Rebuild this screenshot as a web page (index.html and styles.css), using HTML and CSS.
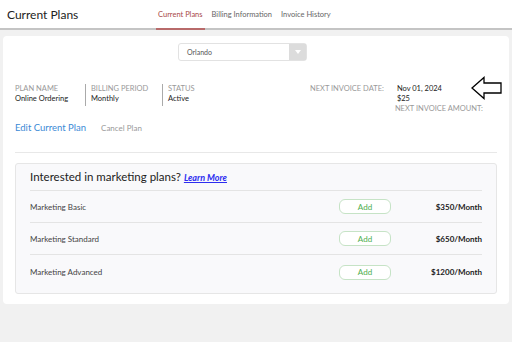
FILE: index.html
```html
<!DOCTYPE html>
<html lang="en">
<head>
  <meta charset="UTF-8" />
  <title>Current Plans</title>
  <link rel="stylesheet" href="styles.css">
</head>
<body>

  <!-- HEADER -->
  <div class="header">
    <div class="page-title">Current Plans</div>
    <div class="tabs">
      <span class="tab active">Current Plans</span>
      <span class="tab">Billing Information</span>
      <span class="tab">Invoice History</span>
    </div>
  </div>

  <div class="card">

    <!-- LOCATION -->
    <div class="select-row">
      <div class="select">
        <span class="select-text">Orlando</span>
        <span class="select-btn"><span class="caret"></span></span>
      </div>
    </div>

    <!-- PLAN INFO -->
    <div class="info-row">
      <div class="info">
        <div class="label">PLAN NAME</div>
        <div class="value">Online Ordering</div>
      </div>
      <div class="info sep">
        <div class="label">BILLING PERIOD</div>
        <div class="value">Monthly</div>
      </div>
      <div class="info sep">
        <div class="label">STATUS</div>
        <div class="value">Active</div>
      </div>
      <div class="invoice">
        <div class="label">NEXT INVOICE DATE:</div>
        <div class="invoice-values">
          <div class="value">Nov 01, 2024</div>
          <div class="value">$25</div>
          <div class="label amount-label">NEXT INVOICE AMOUNT:</div>
        </div>
      </div>
      <svg class="arrow" width="32" height="24" viewBox="0 0 32 24">
        <path d="M1 12 L13 1.5 L13 7 L30 7 L30 17 L13 17 L13 22.5 Z" fill="#fff" stroke="#000" stroke-width="1.3" stroke-linejoin="miter"/>
      </svg>
    </div>

    <div class="actions">
      <span class="link-edit">Edit Current Plan</span>
      <span class="link-cancel">Cancel Plan</span>
    </div>

    <hr class="divider">

    <!-- MARKETING -->
    <div class="marketing">
      <div class="marketing-title">Interested in marketing plans? <a class="learn">Learn More</a></div>
      <div class="plan-row">
        <span class="plan-name">Marketing Basic</span>
        <button class="btn-add">Add</button>
        <span class="price">$350/Month</span>
      </div>
      <div class="plan-row">
        <span class="plan-name">Marketing Standard</span>
        <button class="btn-add">Add</button>
        <span class="price">$650/Month</span>
      </div>
      <div class="plan-row">
        <span class="plan-name">Marketing Advanced</span>
        <button class="btn-add">Add</button>
        <span class="price">$1200/Month</span>
      </div>
    </div>

  </div>

</body>
</html>
```

FILE: styles.css
```css
body {
  font-family: 'Lato', 'Open Sans', sans-serif;
  margin: 0;
  background-color: #f1f1f1;
  color: #222;
}
.header {
  background: #fff;
  height: 28px;
  border-bottom: 2px solid #c4c4c4;
  display: flex;
  align-items: stretch;
}
.page-title {
  font-size: 12px;
  padding-left: 7px;
  width: 149px;
  display: flex;
  align-items: center;
}
.tabs {
  display: flex;
  gap: 5px;
}
.tab {
  font-size: 7.5px;
  color: #666;
  display: flex;
  align-items: center;
  padding: 0 2px;
  margin-bottom: -2px;
  border-bottom: 2px solid transparent;
}
.tab.active {
  color: #a94848;
  border-bottom-color: #b86a6a;
}
.card {
  background: #fff;
  margin: 6px 3px 0;
  border-radius: 4px;
  padding: 7px 12px 10px;
}
.select-row {
  display: flex;
  justify-content: center;
  padding-right: 27px;
}
.select {
  width: 129px;
  height: 18px;
  border: 1px solid #e2e2e2;
  border-radius: 3px;
  display: flex;
  box-sizing: border-box;
}
.select-text {
  flex: 1;
  font-size: 7px;
  color: #555;
  padding-left: 8px;
  display: flex;
  align-items: center;
}
.select-btn {
  width: 17px;
  background: #dcdcdc;
  display: flex;
  align-items: center;
  justify-content: center;
}
.caret {
  border-left: 3px solid transparent;
  border-right: 3px solid transparent;
  border-top: 4px solid #fff;
}
.info-row {
  position: relative;
  display: flex;
  margin-top: 23px;
  height: 22px;
}
.info {
  padding-right: 5px;
}
.info.sep {
  border-left: 1px solid #aaa;
  padding-left: 5px;
}
.info:nth-child(1) { width: 65px; }
.info:nth-child(2) { width: 66px; }
.label {
  font-size: 7.5px;
  color: #999;
  line-height: 10px;
}
.value {
  font-size: 7.5px;
  color: #222;
  line-height: 10px;
}
.invoice {
  display: flex;
  margin-left: auto;
  margin-right: 14px;
  gap: 13px;
}
.amount-label {
  margin-left: -2px;
}
.arrow {
  position: absolute;
  right: -6px;
  top: -8px;
}
.actions {
  margin-top: 16px;
  display: flex;
  align-items: baseline;
  gap: 15px;
}
.link-edit {
  font-size: 9.5px;
  color: #3b8ad6;
}
.link-cancel {
  font-size: 8px;
  color: #999;
}
.divider {
  border: 0;
  border-top: 1px solid #e8e8e8;
  margin: 19px 0 10px;
}
.marketing {
  background: #f9f9fb;
  border: 1px solid #e6e6e6;
  border-radius: 3px;
  padding: 6px 14px 4px;
}
.marketing-title {
  font-size: 11.5px;
  color: #222;
  padding-bottom: 7px;
  border-bottom: 1px solid #e4e4e4;
}
.learn {
  font-size: 9px;
  font-style: italic;
  font-weight: bold;
  color: #2d2df0;
  text-decoration: underline;
}
.plan-row {
  display: flex;
  align-items: center;
  height: 31px;
  border-bottom: 1px solid #e4e4e4;
}
.plan-row:last-child {
  border-bottom: 0;
  height: 34px;
}
.plan-name {
  font-size: 8px;
  color: #444;
  flex: 1;
}
.btn-add {
  width: 52px;
  height: 15px;
  background: #fff;
  border: 1px solid #c6e3c6;
  border-radius: 6px;
  color: #4cae4c;
  font-family: inherit;
  font-size: 8px;
  padding: 0;
}
.price {
  width: 91px;
  text-align: right;
  font-size: 8px;
  font-weight: bold;
  color: #222;
}
```
